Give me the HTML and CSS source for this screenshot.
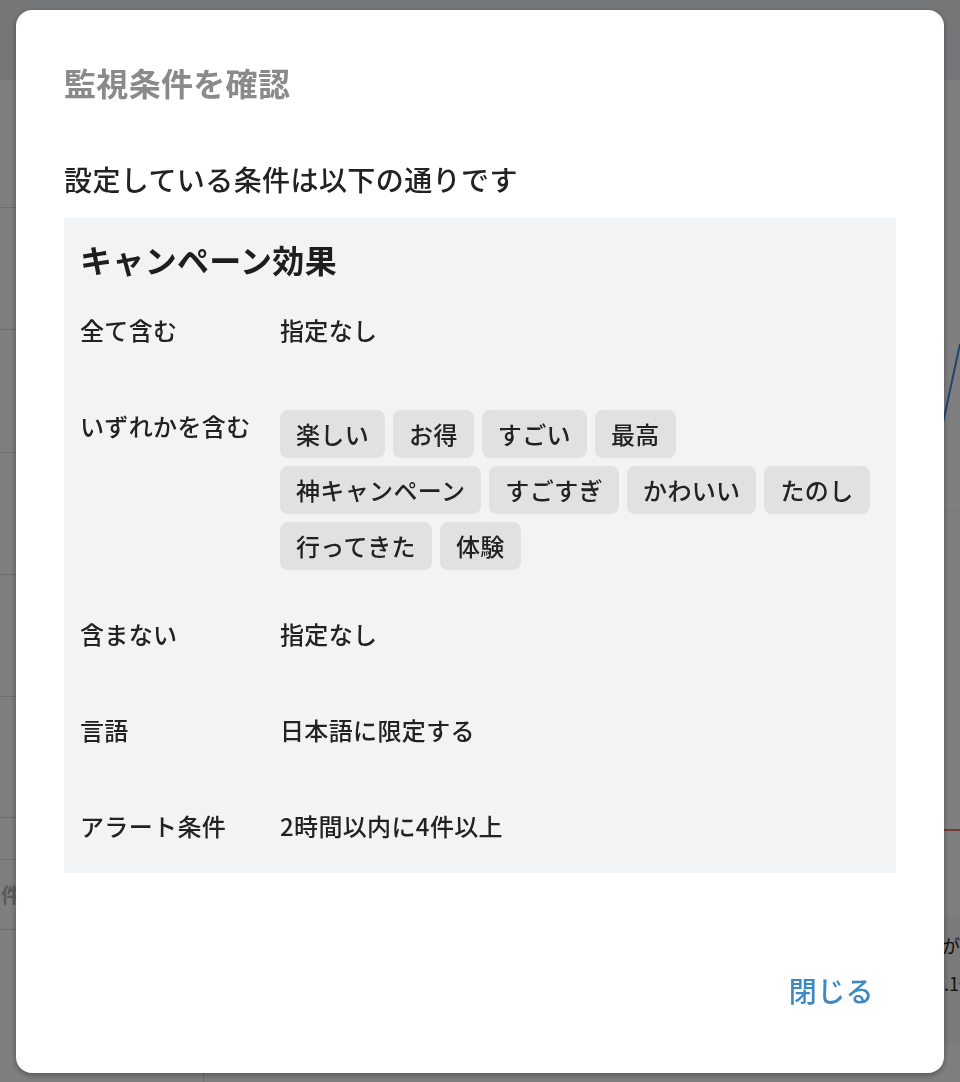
FILE: index.html
```html
<!DOCTYPE html>
<html lang="ja">
<head>
<meta charset="utf-8">
<title>監視条件を確認</title>
<link rel="stylesheet" href="styles.css">
</head>
<body>
<div class="page">
  <header class="topbar"></header>
  <div class="main">
    <aside class="side">
      <div class="side-row h1"></div>
      <div class="side-row h2"></div>
      <div class="side-row h3"></div>
      <div class="side-row h4"></div>
      <div class="side-row h5"></div>
      <div class="side-row h6"></div>
      <div class="side-row h7"></div>
      <div class="side-row h8"><span class="side-count">件</span></div>
    </aside>
    <section class="content">
      <svg class="chart" viewBox="0 0 756 835" width="756" height="835">
        <line x1="0" y1="128" x2="756" y2="128" stroke="#eeeeee" stroke-width="1"/>
        <line x1="0" y1="430" x2="756" y2="430" stroke="#eeeeee" stroke-width="1"/>
        <line x1="0" y1="750" x2="756" y2="750" stroke="#dd4a44" stroke-width="1.5"/>
        <polyline points="700,520 740,338 756,264" fill="none" stroke="#3a8fdc" stroke-width="2"/>
      </svg>
      <div class="panel">
        <p>数が増加</p>
        <p>11.1倍</p>
      </div>
    </section>
  </div>
</div>

<div class="backdrop"></div>

<div class="modal" role="dialog" aria-labelledby="modal-title">
  <h2 class="modal-title" id="modal-title">監視条件を確認</h2>
  <p class="lead">設定している条件は以下の通りです</p>
  <div class="summary">
    <h3 class="summary-title">キャンペーン効果</h3>
    <dl class="cond">
      <div class="cond-row">
        <dt>全て含む</dt>
        <dd>指定なし</dd>
      </div>
      <div class="cond-row">
        <dt>いずれかを含む</dt>
        <dd>
          <ul class="chips">
            <li>楽しい</li>
            <li>お得</li>
            <li>すごい</li>
            <li>最高</li>
            <li>神キャンペーン</li>
            <li>すごすぎ</li>
            <li>かわいい</li>
            <li>たのし</li>
            <li>行ってきた</li>
            <li>体験</li>
          </ul>
        </dd>
      </div>
      <div class="cond-row">
        <dt>含まない</dt>
        <dd>指定なし</dd>
      </div>
      <div class="cond-row">
        <dt>言語</dt>
        <dd>日本語に限定する</dd>
      </div>
      <div class="cond-row">
        <dt>アラート条件</dt>
        <dd>2時間以内に4件以上</dd>
      </div>
    </dl>
  </div>
  <div class="actions">
    <button class="btn-close" type="button">閉じる</button>
  </div>
</div>
</body>
</html>
```

FILE: styles.css
```css
* {
  box-sizing: border-box;
}

html,
body {
  margin: 0;
  padding: 0;
}

body {
  width: 960px;
  height: 1082px;
  overflow: hidden;
  background: #ffffff;
  color: #222222;
  font-family: "Noto Sans CJK JP", "Noto Sans", sans-serif;
}

/* ---------- background page ---------- */
.page {
  height: 1082px;
  display: flex;
  flex-direction: column;
}

.topbar {
  flex: none;
  height: 80px;
  background: #eceef3;
}

.main {
  flex: 1;
  display: grid;
  grid-template-columns: 204px 1fr;
}

.side {
  display: flex;
  flex-direction: column;
  border-right: 1px solid #dedede;
}

.side-row {
  flex: none;
  border-bottom: 1px solid #dedede;
}

.h1 { height: 128px; }
.h2 { height: 122px; }
.h3 { height: 123px; }
.h4 { height: 122px; }
.h5 { height: 122px; }
.h6 { height: 121px; }
.h7 { height: 42px; }
.h8 {
  height: 70px;
  display: flex;
  align-items: center;
  padding-left: 1px;
}

.side-count {
  font-size: 20px;
  font-weight: 700;
  color: #b4b4b4;
}

.content {
  display: flex;
  flex-direction: column;
  min-width: 0;
}

.chart {
  display: block;
  flex: none;
}

.panel {
  flex: none;
  height: 130px;
  background: #f4f4f4;
  padding: 11px 0 0 720px;
  font-size: 18px;
  line-height: 38px;
  white-space: nowrap;
  color: #222222;
}

.panel p {
  margin: 0;
}

.backdrop {
  position: fixed;
  inset: 0;
  background: rgba(0, 0, 0, 0.5);
}

/* ---------- modal ---------- */
.modal {
  position: fixed;
  left: 16px;
  top: 10px;
  width: 928px;
  padding: 48px 48px 53px;
  background: #ffffff;
  border-radius: 16px;
  box-shadow: 0 2px 6px rgba(0, 0, 0, 0.35);
}

.modal-title {
  margin: 0 0 52px;
  font-size: 32px;
  line-height: 48px;
  font-weight: 700;
  letter-spacing: 0.01em;
  color: #8a8a8a;
}

.lead {
  margin: 0 0 18px;
  font-size: 28px;
  line-height: 42px;
  font-weight: 500;
  letter-spacing: 0.015em;
  color: #222222;
}

.summary {
  background: #f2f3f5;
  padding: 19px 16px 15px 16px;
}

.summary-title {
  margin: 0 0 33px;
  font-size: 32px;
  line-height: 44px;
  font-weight: 700;
  letter-spacing: 0.01em;
  color: #1e1e1e;
}

.cond {
  margin: 0;
  display: flex;
  flex-direction: column;
  gap: 48px;
}

.cond-row {
  display: grid;
  grid-template-columns: 200px 1fr;
  align-items: start;
  min-height: 48px;
  font-size: 24px;
  line-height: 32px;
  font-weight: 500;
  letter-spacing: 0.015em;
  color: #222222;
}

.cond-row dt,
.cond-row dd {
  margin: 0;
}

.chips {
  list-style: none;
  margin: 0;
  padding: 0;
  display: flex;
  flex-wrap: wrap;
  gap: 8px;
}

.chips li {
  height: 48px;
  line-height: 48px;
  padding: 0 16px;
  background: #e0e1e3;
  border-radius: 8px;
}

.actions {
  margin-top: 89px;
  display: flex;
  justify-content: flex-end;
}

.btn-close {
  font-family: inherit;
  font-size: 28px;
  line-height: 42px;
  font-weight: 500;
  letter-spacing: 0.015em;
  padding: 7px 22px 9px;
  border: none;
  background: none;
  color: #3c89c6;
  cursor: pointer;
}
```
